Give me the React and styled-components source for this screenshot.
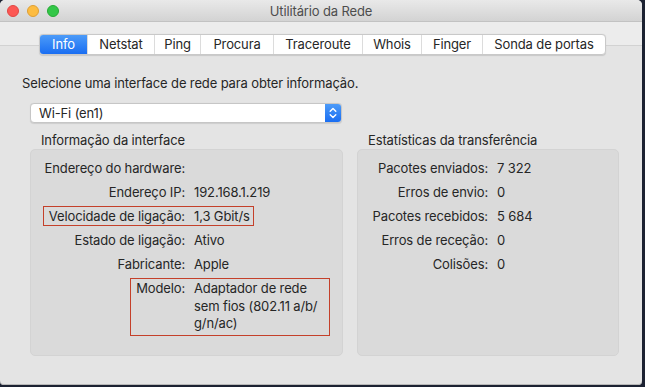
import styled, { createGlobalStyle } from 'styled-components';

const GlobalStyle = createGlobalStyle`
  html, body {
    margin: 0;
    padding: 0;
    background: #1c2232;
  }
  body {
    font-family: 'Inter', 'Liberation Sans', sans-serif;
    font-size: 13px;
    letter-spacing: -0.13px;
    color: #262626;
  }
`;

const tabs = [
  { name: 'Info', width: 47 },
  { name: 'Netstat', width: 67 },
  { name: 'Ping', width: 46 },
  { name: 'Procura', width: 73 },
  { name: 'Traceroute', width: 89 },
  { name: 'Whois', width: 59 },
  { name: 'Finger', width: 61 },
  { name: 'Sonda de portas', width: 123 },
];

const interfaceRows = [
  { label: 'Endereço do hardware:', value: '' },
  { label: 'Endereço IP:', value: '192.168.1.219' },
  { label: 'Velocidade de ligação:', value: '1,3 Gbit/s', highlight: true },
  { label: 'Estado de ligação:', value: 'Ativo' },
  { label: 'Fabricante:', value: 'Apple' },
  { label: 'Modelo:', value: 'Adaptador de rede sem fios (802.11 a/b/ g/n/ac)', highlight: true, wrap: true },
];

const statRows = [
  { label: 'Pacotes enviados:', value: '7 322' },
  { label: 'Erros de envio:', value: '0' },
  { label: 'Pacotes recebidos:', value: '5 684' },
  { label: 'Erros de receção:', value: '0' },
  { label: 'Colisões:', value: '0' },
];

const InfoTable = ({ rows, labelWidth }) => (
  <Table $labelWidth={labelWidth}>
    {rows.map((row) => (
      <Row key={row.label}>
        <Label $highlight={row.highlight}>{row.label}</Label>
        <Value $highlight={row.highlight} $wrap={row.wrap}>{row.value}</Value>
      </Row>
    ))}
  </Table>
);

const App = () => (
  <>
    <GlobalStyle />
    <Window>
      <TitleBar>
        <Lights>
          <Light $color="#fc5753" $border="#df4744" />
          <Light $color="#fdbc40" $border="#de9f34" />
          <Light $color="#33c748" $border="#27aa35" />
        </Lights>
        <Title>Utilitário da Rede</Title>
        <span />
      </TitleBar>
      <Toolbar>
        <Segmented>
          {tabs.map((t, i) => (
            <Segment key={t.name} $active={i === 0} $width={t.width}>{t.name}</Segment>
          ))}
        </Segmented>
      </Toolbar>
      <TabPanel>
        <Prompt>Selecione uma interface de rede para obter informação.</Prompt>
        <Select>
          <SelectText>Wi-Fi (en1)</SelectText>
          <Stepper>
            <svg width="8" height="12" viewBox="0 0 8 12" fill="none" stroke="#fff" strokeWidth="1.4" strokeLinecap="round" strokeLinejoin="round">
              <path d="M1.2 4.2 L4 1.4 L6.8 4.2" />
              <path d="M1.2 7.8 L4 10.6 L6.8 7.8" />
            </svg>
          </Stepper>
        </Select>
        <Columns>
          <Column>
            <GroupTitle>Informação da interface</GroupTitle>
            <GroupBox>
              <InfoTable rows={interfaceRows} labelWidth={163} />
            </GroupBox>
          </Column>
          <Column>
            <GroupTitle>Estatísticas da transferência</GroupTitle>
            <GroupBox>
              <InfoTable rows={statRows} labelWidth={139} />
            </GroupBox>
          </Column>
        </Columns>
      </TabPanel>
    </Window>
  </>
);

// Styles
const Window = styled.div`
  width: 642px;
  height: 385px;
  background: #e4e4e4;
  border-radius: 5px 5px 4px 4px;
  overflow: hidden;
  display: flex;
  flex-direction: column;
  box-shadow: inset 0 -1px 0 #b8b8b8;
`;

const TitleBar = styled.div`
  height: 22px;
  flex: 0 0 22px;
  box-sizing: border-box;
  display: grid;
  grid-template-columns: 1fr auto 1fr;
  align-items: center;
  background: linear-gradient(#e9e9e9, #d3d3d3);
  border-bottom: 1px solid #c2c2c2;
`;

const Lights = styled.div`
  display: flex;
  gap: 8px;
  padding-left: 7px;
`;

const Light = styled.span`
  width: 12px;
  height: 12px;
  box-sizing: border-box;
  border-radius: 50%;
  background: ${(p) => p.$color};
  border: 0.5px solid ${(p) => p.$border};
`;

const Title = styled.div`
  color: #4d4d4d;
  font-size: 13px;
  line-height: 22px;
`;

const Toolbar = styled.div`
  background: #ececec;
  padding: 12px 0 0 39px;
  height: 23px;
  box-sizing: border-box;
  position: relative;
  z-index: 1;
`;

const Segmented = styled.div`
  display: inline-flex;
  height: 21px;
  box-sizing: border-box;
  background: #ffffff;
  border: 1px solid #c9c9c9;
  border-radius: 4px;
  box-shadow: 0 0.5px 1px rgba(0, 0, 0, 0.12);
  overflow: hidden;
`;

const Segment = styled.div`
  flex: 0 0 ${(p) => p.$width}px;
  box-sizing: border-box;
  white-space: nowrap;
  text-align: center;
  line-height: 19px;
  font-size: 13px;
  color: ${(p) => (p.$active ? '#ffffff' : '#262626')};
  background: ${(p) => (p.$active ? 'linear-gradient(#4c9bf8, #1a6ef2)' : 'transparent')};
  & + & {
    border-left: 1px solid #dcdcdc;
  }
`;

const TabPanel = styled.div`
  flex: 1;
  border-top: 1px solid #d2d2d2;
  padding: 20px 22px 0 22px;
  display: flex;
  flex-direction: column;
`;

const Prompt = styled.div`
  line-height: 16px;
  margin-top: 9px;
`;

const Select = styled.div`
  margin: 12px 0 0 8px;
  width: 312px;
  height: 20px;
  box-sizing: border-box;
  display: flex;
  background: #ffffff;
  border: 1px solid #c6c6c6;
  border-radius: 4px;
  box-shadow: 0 0.5px 1px rgba(0, 0, 0, 0.1);
  overflow: hidden;
`;

const SelectText = styled.div`
  flex: 1;
  padding-left: 8px;
  line-height: 18px;
`;

const Stepper = styled.div`
  width: 16px;
  display: flex;
  align-items: center;
  justify-content: center;
  background: linear-gradient(#4c9bf8, #1a6ef2);
`;

const Columns = styled.div`
  display: grid;
  grid-template-columns: 313px 262px;
  gap: 14px;
  margin: 9px 0 0 8px;
`;

const Column = styled.div`
  display: flex;
  flex-direction: column;
`;

const GroupTitle = styled.div`
  padding-left: 11px;
  line-height: 16px;
  height: 17px;
`;

const GroupBox = styled.div`
  height: 207px;
  box-sizing: border-box;
  background: #dadada;
  border: 1px solid #d3d3d3;
  border-radius: 5px;
  padding-top: 8px;
`;

const Table = styled.div`
  display: grid;
  grid-template-columns: ${(p) => p.$labelWidth}px auto;
  row-gap: 4px;
  align-items: stretch;
`;

const Row = styled.div`
  display: contents;
`;

const Label = styled.div`
  justify-self: end;
  text-align: right;
  line-height: 18px;
  padding: 0 9px 0 ${(p) => (p.$highlight ? 5 : 0)}px;
  box-sizing: border-box;
  border: 1px solid ${(p) => (p.$highlight ? '#c4402a' : 'transparent')};
  border-right: none;
`;

const Value = styled.div`
  justify-self: start;
  line-height: ${(p) => (p.$wrap ? '17.5px' : '18px')};
  width: ${(p) => (p.$wrap ? '136px' : 'auto')};
  padding: ${(p) => (p.$wrap ? '1px 0 2px 0' : '0')};
  padding-right: ${(p) => (p.$highlight ? 3 : 0)}px;
  box-sizing: border-box;
  border: 1px solid ${(p) => (p.$highlight ? '#c4402a' : 'transparent')};
  border-left: none;
  min-height: 20px;
`;

export default App;
